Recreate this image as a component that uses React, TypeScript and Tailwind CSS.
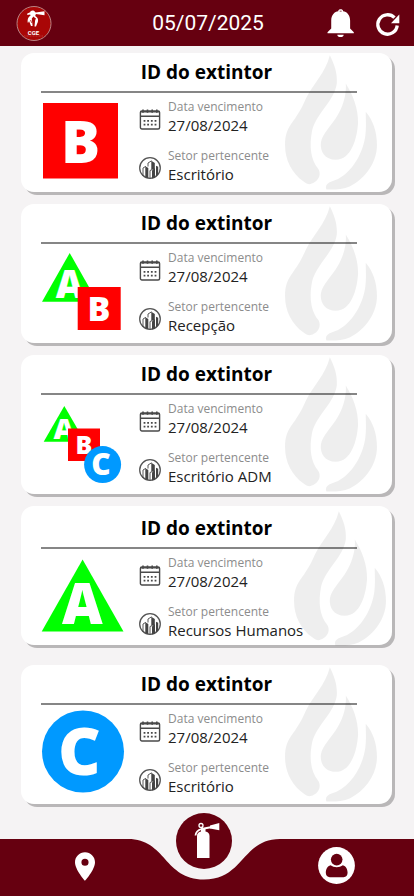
import React from "react";

type Kind = "B" | "AB" | "ABC" | "A" | "C";

type Extinguisher = {
  kind: Kind;
  due: string;
  sector: string;
  spacing: string;
  flame: string;
};

const items: Extinguisher[] = [
  { kind: "B", due: "27/08/2024", sector: "Escritório", spacing: "mt-[7px] pt-[5px] pb-2", flame: "top-[2px] right-[15px]" },
  { kind: "AB", due: "27/08/2024", sector: "Recepção", spacing: "mt-3 pt-[5px] pb-2", flame: "top-[2px] right-[15px]" },
  { kind: "ABC", due: "27/08/2024", sector: "Escritório ADM", spacing: "mt-3 pt-[5px] pb-2", flame: "top-[2px] right-[15px]" },
  { kind: "A", due: "27/08/2024", sector: "Recursos Humanos", spacing: "mt-3 pt-2 pb-[5px]", flame: "top-[5px] right-[6px]" },
  { kind: "C", due: "27/08/2024", sector: "Escritório", spacing: "mt-5 pt-[5px] pb-2", flame: "top-[2px] right-[15px]" },
];

function Letter({ x, y, size, children }: { x: number; y: number; size: number; children: string }) {
  return (
    <text x={x} y={y} fontSize={size} textAnchor="middle" fill="#fff" className="font-['Open_Sans',sans-serif] font-extrabold">
      {children}
    </text>
  );
}

function ClassBadge({ kind }: { kind: Kind }) {
  return (
    <svg viewBox="0 0 84 86" className="h-[86px] w-[84px] shrink-0 overflow-visible" role="img" aria-label={`Classe ${kind}`}>
      {kind === "B" && (
        <>
          <rect x="2" y="5" width="75" height="75.5" fill="#f00" />
          <Letter x={39.5} y={65} size={58}>B</Letter>
        </>
      )}
      {kind === "AB" && (
        <>
          <path d="M28.7 4 56.4 52.8H1z" fill="#0f0" />
          <Letter x={28.5} y={49} size={38}>A</Letter>
          <rect x="36.7" y="38" width="43" height="43" fill="#f00" />
          <Letter x={58} y={71.7} size={34}>B</Letter>
        </>
      )}
      {kind === "ABC" && (
        <>
          <path d="M23.3 6 44 41.7H2.7z" fill="#0f0" />
          <Letter x={23} y={39.3} size={29}>A</Letter>
          <rect x="27" y="28.5" width="32" height="32.5" fill="#f00" />
          <Letter x={43} y={53.7} size={25}>B</Letter>
          <circle cx="61.6" cy="64.6" r="18.5" fill="#0099ff" />
          <Letter x={60} y={75} size={30}>C</Letter>
        </>
      )}
      {kind === "A" && (
        <>
          <path d="M41.6 5.5 82.5 77.5H.7z" fill="#0f0" />
          <Letter x={41.3} y={70} size={56}>A</Letter>
        </>
      )}
      {kind === "C" && (
        <>
          <circle cx="42" cy="41.5" r="41" fill="#0099ff" />
          <Letter x={38.5} y={64.5} size={66}>C</Letter>
        </>
      )}
    </svg>
  );
}

function Flame({ className }: { className: string }) {
  return (
    <svg viewBox="225 30 277 405" className={`pointer-events-none absolute h-[135px] w-[92px] ${className}`} fill="#000" fillOpacity=".068" aria-hidden="true">
      <path d="M360 30C375 60 383 85 381 115C375 165 320 205 307 255C297 305 303 345 325 372C334 384 331 410 302 418C294 419 288 416 282 411C245 385 225 345 225 300C225 268 233 250 248 230C270 200 279 180 288 160C310 115 346 85 360 30Z" />
      <path d="M408 115C430 150 446 190 445 235C442 280 425 345 378 345C345 345 330 320 333 293C338 265 365 243 385 208C405 172 410 140 408 115Z" />
      <path d="M468 200C490 225 502 260 502 300C502 350 470 400 420 425C400 433 370 436 350 434C345 425 350 415 365 410C420 395 460 330 467 270C470 240 468 220 468 200Z" />
    </svg>
  );
}

function CalendarIcon() {
  return (
    <svg viewBox="0 0 22 22" className="h-[22px] w-[22px] shrink-0" fill="none" stroke="#4a4a4a" strokeWidth="1.4" aria-hidden="true">
      <rect x="1.4" y="3" width="19.2" height="18" rx="1.5" />
      <path d="M1.4 8.3h19.2M1.4 3.8h19.2" strokeWidth="1.6" />
      <path d="M4 1.5v3.3M8.5 1.5v3.3M13.2 1.5v3.3M17.8 1.5v3.3" strokeWidth="1.6" />
      <path d="M4.6 12.8h1.8M8.2 12.8H10M11.9 12.8h1.8M15.6 12.8h1.8M4.6 16.6h1.8M8.2 16.6H10M11.9 16.6h1.8M15.6 16.6h1.8" strokeWidth="1.8" />
    </svg>
  );
}

function BuildingIcon() {
  return (
    <svg viewBox="0 0 22 22" className="h-[22px] w-[22px] shrink-0" fill="#444" aria-hidden="true">
      <circle cx="11" cy="11" r="10.3" fill="none" stroke="#555" strokeWidth="1.3" />
      <path d="M6.3 9.3 9.3 11v10.3L6.3 20.2zM12.3 3.8l3.5 2.2v6.5h-3.5zM13 13.5l3-1.9v9l-3 .9zM17 8.8l2.2 1v7.6l-2.2 2z" />
      <path d="M4 19V11l2.8-1.7M9 9.5V6l3.6-2.2M11 21.5v-8l2.4-1" fill="none" stroke="#444" strokeWidth=".9" />
    </svg>
  );
}

function Detail({ icon, label, value }: { icon: React.ReactNode; label: string; value: string }) {
  return (
    <div className="flex items-center gap-[7px]">
      <span className="pt-1.5">{icon}</span>
      <dl>
        <dt className="text-[12px] leading-[18px] text-[#8c8c8c]">{label}</dt>
        <dd className="text-[15px] leading-[18px] text-[#222]">{value}</dd>
      </dl>
    </div>
  );
}

function Card({ item }: { item: Extinguisher }) {
  return (
    <li className={`relative rounded-[13px] bg-white shadow-[3px_3px_0_#b9b7b8] ${item.spacing}`}>
      <h2 className="text-center text-[19px] leading-7 font-bold text-black">ID do extintor</h2>
      <hr className="mt-[5px] mr-[35px] ml-5 border-t-2 border-[#868686]" />
      <div className="mt-[5px] flex items-start gap-[14px] pl-5">
        <ClassBadge kind={item.kind} />
        <div className="flex flex-col gap-[13px]">
          <Detail icon={<CalendarIcon />} label="Data vencimento" value={item.due} />
          <Detail icon={<BuildingIcon />} label="Setor pertencente" value={item.sector} />
        </div>
      </div>
      <Flame className={item.flame} />
    </li>
  );
}

function Logo() {
  return (
    <svg viewBox="0 0 36 36" className="h-9 w-9" role="img" aria-label="CGE">
      <circle cx="18" cy="18.5" r="17" fill="#a90606" stroke="#b98484" strokeWidth="1" />
      <path d="M14.2 7.2c0-1.6 3.4-2.6 4.5-.6l1 .9 8.8-1.2v4l-8.6-1.2-.7 2c3 1.6 3.8 4.5 1.8 7.9l-1 2.5h-1.5l.8-8.2-1.8-1.7-1.7 2 .8 7.4h-1.6l-2-5-.5 1.5h-.9c-.1-3.5.5-5.3 3-6.9l-.5-1.2-2.8.6v-1.5z" fill="#fff" />
      <path d="m14.6 15 1 2.8M19.5 13l-1.5 4" stroke="#a90606" strokeWidth=".8" />
      <text x="17.5" y="29.5" fontSize="6" textAnchor="middle" fill="#fff" className="font-[Roboto,sans-serif] font-bold">CGE</text>
      <path d="M8 31h19" stroke="#c75454" strokeWidth=".6" strokeDasharray="1 .5" />
    </svg>
  );
}

function BottomNav() {
  return (
    <nav className="sticky bottom-0 mt-[35px] grid h-[57px] grid-cols-[minmax(0,20fr)_168px_minmax(0,21fr)]">
      <div className="flex items-start justify-end bg-[#660010] pt-[13px] pr-[25px]">
        <button type="button" aria-label="Localização">
          <svg viewBox="5 2 14 20" className="h-[29px] w-5" fill="#fff" aria-hidden="true">
            <path d="M12 2C8.13 2 5 5.13 5 9c0 5.25 7 13 7 13s7-7.75 7-13c0-3.87-3.13-7-7-7zm0 9.5a2.5 2.5 0 1 1 0-5 2.5 2.5 0 0 1 0 5z" />
          </svg>
        </button>
      </div>
      <div className="relative">
        <svg viewBox="0 0 168 57" className="h-[57px] w-[168px]" fill="#660010" aria-hidden="true">
          <path d="M0 0H8C46 0 44 40.5 84 40.5C124 40.5 122 0 160 0H168V57H0Z" />
        </svg>
        <button type="button" aria-label="Extintores" className="absolute -top-[26px] left-14 h-14 w-14 rounded-full bg-[#660010]">
          <svg viewBox="0 0 56 56" className="h-14 w-14" aria-hidden="true">
            <path d="M21 45V23c0-2.6 1.5-4.2 4-4.6V16h4.5v2.4c2.5.4 4 2 4 4.6v22z" fill="#fff" />
            <path d="M19.5 22.5c.3-3.5 2.5-5.5 6-6.5l10.5-2" fill="none" stroke="#fff" strokeWidth="1.8" />
            <circle cx="25" cy="12.5" r="2" fill="none" stroke="#fff" strokeWidth="1.3" />
            <path d="m26 13.5 3 3.5h-4zM34 12.5l9.3-2.5v7.2L34 15.5z" fill="#fff" />
          </svg>
        </button>
      </div>
      <div className="flex items-start bg-[#660010] pt-2 pl-[30px]">
        <button type="button" aria-label="Perfil">
          <svg viewBox="0 0 37 37" className="h-[37px] w-[37px]" aria-hidden="true">
            <circle cx="18.5" cy="18.5" r="18.4" fill="#fff" />
            <circle cx="18.7" cy="12.6" r="5.8" fill="#660010" />
            <path d="M12.5 18.2c3.6 2.6 8.8 2.6 12.4 0 3 .9 4.7 4 4.7 7.6 0 2.7-1.6 4.4-4 4.4H11.8c-2.4 0-4-1.7-4-4.4 0-3.6 1.7-6.7 4.7-7.6z" fill="#660010" />
          </svg>
        </button>
      </div>
    </nav>
  );
}

export default function App() {
  return (
    <div className="flex min-h-screen flex-col bg-[#f5f3f4] font-['Open_Sans',sans-serif]">
      <header className="grid h-[46px] grid-cols-[1fr_auto_1fr] items-center bg-[#660010] pr-[14px] pl-4 text-white">
        <Logo />
        <h1 className="font-[Roboto,sans-serif] text-[21px] leading-7">05/07/2025</h1>
        <div className="flex items-center justify-end gap-[22px]">
          <button type="button" aria-label="Notificações">
            <svg viewBox="360 32 79 83" className="h-7 w-[27px]" fill="#fff" aria-hidden="true">
              <path d="M372 66C372 50 382 40 393 39C391 31 409 31 407 39C418 40 428 50 428 66V90L439 101V104H361V101L372 90Z" />
              <path d="M390 108h19c0 4-4 7-9.5 7s-9.5-3-9.5-7z" />
              <path d="M397 38.5h6" stroke="#660010" strokeWidth="2" />
            </svg>
          </button>
          <button type="button" aria-label="Atualizar">
            <svg viewBox="0 0 24 24" className="h-6 w-6 overflow-visible" aria-hidden="true">
              <path d="M21.2 14.5A9.7 9.7 0 1 1 18.5 6.7" fill="none" stroke="#fff" strokeWidth="3.3" />
              <path d="M23.3 3.5v8.8h-8.3z" fill="#fff" />
            </svg>
          </button>
        </div>
      </header>
      <main className="grow pr-[22px] pl-[21px]">
        <ul className="flex flex-col">
          {items.map((item) => (
            <Card key={item.kind} item={item} />
          ))}
        </ul>
      </main>
      <BottomNav />
    </div>
  );
}
